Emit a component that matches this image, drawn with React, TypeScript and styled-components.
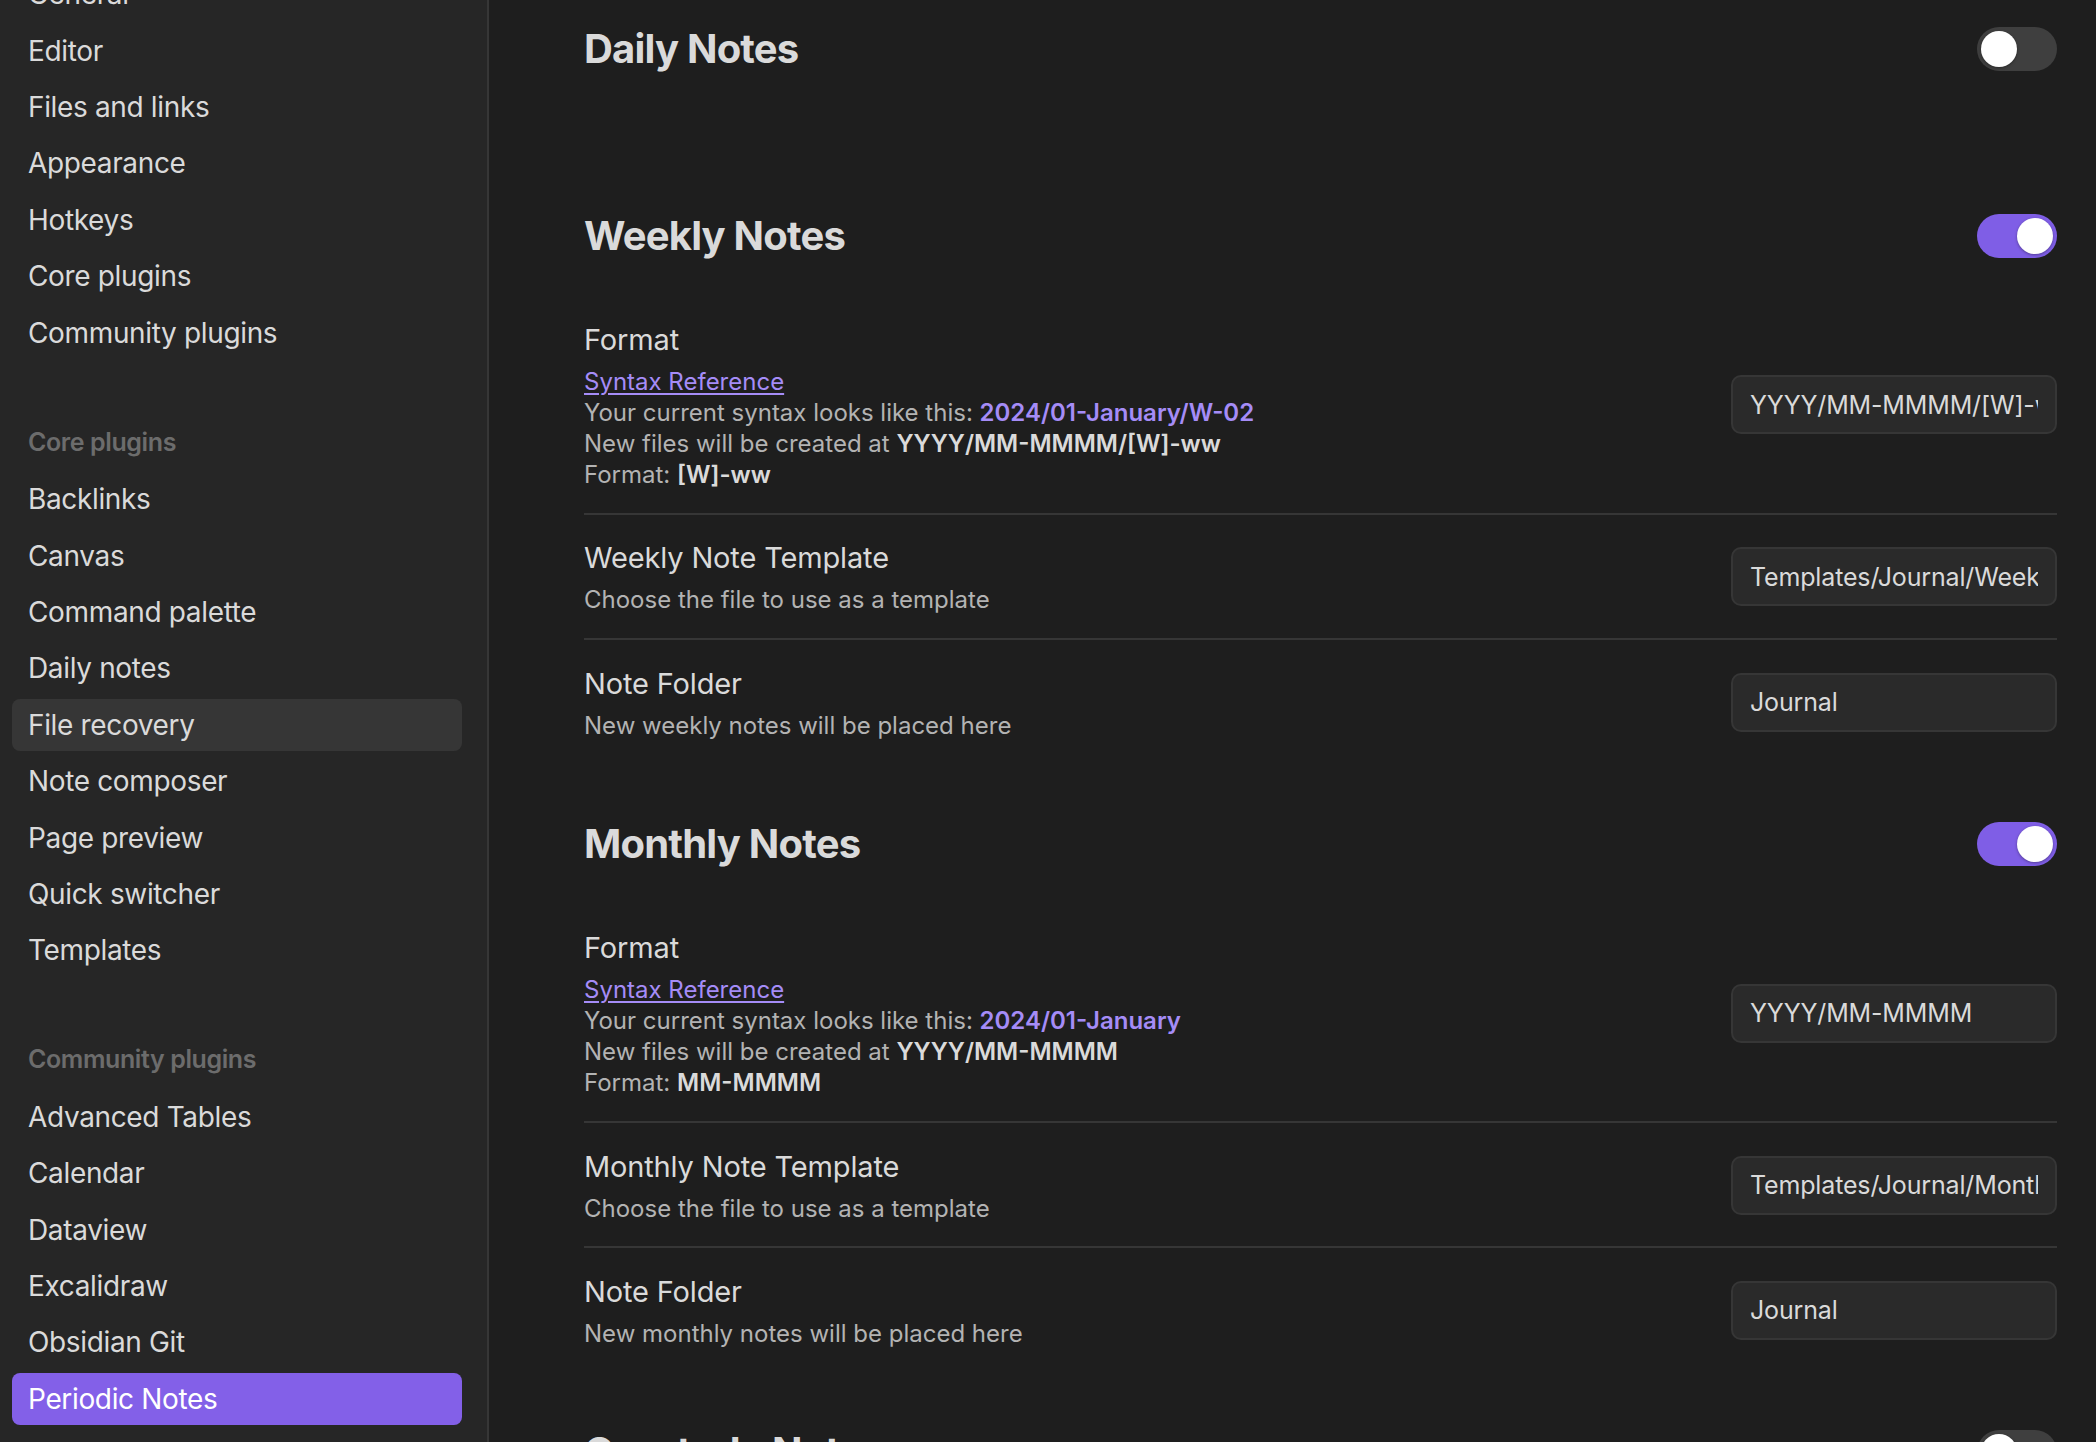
import React from "react";
import styled, { createGlobalStyle } from "styled-components";

const GlobalStyle = createGlobalStyle`
  html, body { margin: 0; padding: 0; background: #1e1e1e; overflow: hidden; }
  * { box-sizing: border-box; }
  #root { height: 100vh; }
`;

const Shell = styled.div`
  display: flex;
  height: 100vh;
  overflow: hidden;
  font-family: Inter, "Noto Sans", sans-serif;
  -webkit-font-smoothing: antialiased;
  background: #1e1e1e;
`;

const Sidebar = styled.nav`
  width: 489px;
  flex-shrink: 0;
  background: #262626;
  border-right: 2px solid #363636;
  overflow: hidden;
  padding: 0 25px 0 12px;
`;

const NavList = styled.div`
  display: flex;
  flex-direction: column;
  gap: 4.4px;
  margin-top: -31.7px;
`;

const NavHeader = styled.div`
  font-size: 25px;
  font-weight: 600;
  letter-spacing: -0.4px;
  color: #6c6c6c;
  line-height: 34px;
  padding: 0 16px;
  margin: 61.6px 0 10.2px;
`;

const NavItem = styled.div<{ $state?: "hover" | "active" }>`
  height: 52px;
  display: flex;
  align-items: center;
  padding: 0 16px;
  border-radius: 8px;
  font-size: 28px;
  letter-spacing: -0.35px;
  color: ${(p) => (p.$state === "active" ? "#ffffff" : "#dadada")};
  background: ${(p) =>
    p.$state === "active" ? "#8360e8" : p.$state === "hover" ? "#363636" : "transparent"};
  white-space: nowrap;
`;

const Main = styled.main`
  flex: 1;
  padding: 27px 39px 0 95px;
  overflow: hidden;
`;

const Section = styled.section`
  display: flex;
  flex-direction: column;
  margin-bottom: 59px;
`;

const HeadingRow = styled.div<{ $expanded: boolean }>`
  display: flex;
  align-items: center;
  justify-content: space-between;
  height: 44px;
  margin-bottom: ${(p) => (p.$expanded ? 38 : 84)}px;
`;

const Heading = styled.h2`
  margin: 0;
  font-size: 40px;
  line-height: 1;
  font-weight: 700;
  letter-spacing: -0.8px;
  color: #dadada;
`;

const Toggle = styled.div<{ $on: boolean }>`
  position: relative;
  width: 80px;
  height: 44px;
  border-radius: 22px;
  flex-shrink: 0;
  background: ${(p) => (p.$on ? "#7f5ee6" : "#3f3f3f")};
  &::after {
    content: "";
    position: absolute;
    top: 4px;
    left: ${(p) => (p.$on ? 40 : 4)}px;
    width: 36px;
    height: 36px;
    border-radius: 50%;
    background: #ffffff;
    box-shadow: 0 1px 3px rgba(0, 0, 0, 0.35);
  }
`;

const Item = styled.div<{ $first?: boolean }>`
  display: flex;
  align-items: center;
  gap: 40px;
  padding: 23.5px 0 22.5px;
  border-top: ${(p) => (p.$first ? "none" : "2px solid #363636")};
`;

const Info = styled.div`
  flex: 1;
  min-width: 0;
`;

const Name = styled.div`
  font-size: 29px;
  letter-spacing: -0.15px;
  line-height: 39px;
  color: #dadada;
`;

const Desc = styled.div`
  margin-top: 7px;
  font-size: 24px;
  line-height: 31.2px;
  color: #b3b3b3;
`;

const Line = styled.div``;

const Link = styled.a`
  color: #a58cf7;
  text-decoration: underline;
  text-underline-offset: 3px;
  cursor: pointer;
`;

const Strong = styled.strong<{ $accent?: boolean }>`
  font-weight: 600;
  color: ${(p) => (p.$accent ? "#a58cf7" : "#dadada")};
`;

const TextInput = styled.input`
  width: 326px;
  height: 59px;
  flex-shrink: 0;
  background: #2a2a2a;
  border: 2px solid #363636;
  border-radius: 10px;
  color: #dadada;
  font-family: Inter, "Noto Sans", sans-serif;
  font-size: 25px;
  letter-spacing: -0.15px;
  padding: 0 17px;
  outline: none;
`;

const navMain = ["General", "Editor", "Files and links", "Appearance", "Hotkeys", "Core plugins", "Community plugins"];
const navCore = ["Backlinks", "Canvas", "Command palette", "Daily notes", "File recovery", "Note composer", "Page preview", "Quick switcher", "Templates"];
const navCommunity = ["Advanced Tables", "Calendar", "Dataview", "Excalidraw", "Obsidian Git", "Periodic Notes"];

type PeriodProps = {
  title: string;
  on: boolean;
  unit: string;
  example: string;
  path: string;
  format: string;
  template: string;
};

const Period: React.FC<PeriodProps> = ({ title, on, unit, example, path, format, template }) => (
  <Section>
    <HeadingRow $expanded={on}>
      <Heading>{title}</Heading>
      <Toggle $on={on} />
    </HeadingRow>
    {on && (
      <>
        <Item $first>
          <Info>
            <Name>Format</Name>
            <Desc>
              <Line>
                <Link>Syntax Reference</Link>
              </Line>
              <Line>
                Your current syntax looks like this: <Strong $accent>{example}</Strong>
              </Line>
              <Line>
                New files will be created at <Strong>{path}</Strong>
              </Line>
              <Line>
                Format: <Strong>{format}</Strong>
              </Line>
            </Desc>
          </Info>
          <TextInput readOnly value={path} />
        </Item>
        <Item>
          <Info>
            <Name>{unit.charAt(0).toUpperCase() + unit.slice(1)} Note Template</Name>
            <Desc>Choose the file to use as a template</Desc>
          </Info>
          <TextInput readOnly value={template} />
        </Item>
        <Item>
          <Info>
            <Name>Note Folder</Name>
            <Desc>New {unit} notes will be placed here</Desc>
          </Info>
          <TextInput readOnly value="Journal" />
        </Item>
      </>
    )}
  </Section>
);

export default function App() {
  return (
    <>
      <GlobalStyle />
      <Shell>
        <Sidebar>
          <NavList>
            {navMain.map((n) => (
              <NavItem key={n}>{n}</NavItem>
            ))}
            <NavHeader>Core plugins</NavHeader>
            {navCore.map((n) => (
              <NavItem key={n} $state={n === "File recovery" ? "hover" : undefined}>
                {n}
              </NavItem>
            ))}
            <NavHeader>Community plugins</NavHeader>
            {navCommunity.map((n) => (
              <NavItem key={n} $state={n === "Periodic Notes" ? "active" : undefined}>
                {n}
              </NavItem>
            ))}
          </NavList>
        </Sidebar>
        <Main>
          <Period title="Daily Notes" on={false} unit="daily" example="" path="" format="" template="" />
          <Period
            title="Weekly Notes"
            on
            unit="weekly"
            example="2024/01-January/W-02"
            path="YYYY/MM-MMMM/[W]-ww"
            format="[W]-ww"
            template="Templates/Journal/Weekly"
          />
          <Period
            title="Monthly Notes"
            on
            unit="monthly"
            example="2024/01-January"
            path="YYYY/MM-MMMM"
            format="MM-MMMM"
            template="Templates/Journal/Monthly"
          />
          <Period title="Quarterly Notes" on={false} unit="quarterly" example="" path="" format="" template="" />
        </Main>
      </Shell>
    </>
  );
}
